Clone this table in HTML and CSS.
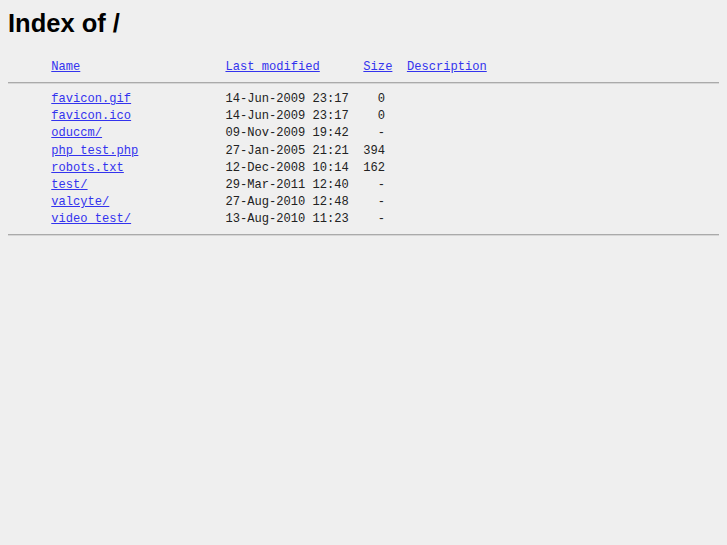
FILE: index.html
```html
<!DOCTYPE html>
<html lang="en">

<head>
    <meta charset="UTF-8">
    <title>Index of /</title>
    <link rel="stylesheet" href="styles.css">
</head>

<body>
    <h1>Index of /</h1>
    <div class="listing">
        <div class="row"><span class="icon"></span> <a href="#">Name</a>                    <a href="#">Last modified</a>      <a href="#">Size</a>  <a href="#">Description</a></div>
        <hr>
        <div class="row"><span class="icon"></span> <a href="#">favicon.gif</a>             14-Jun-2009 23:17    0   </div>
        <div class="row"><span class="icon"></span> <a href="#">favicon.ico</a>             14-Jun-2009 23:17    0   </div>
        <div class="row"><span class="icon"></span> <a href="#">oduccm/</a>                 09-Nov-2009 19:42    -   </div>
        <div class="row"><span class="icon"></span> <a href="#">php_test.php</a>            27-Jan-2005 21:21  394   </div>
        <div class="row"><span class="icon"></span> <a href="#">robots.txt</a>              12-Dec-2008 10:14  162   </div>
        <div class="row"><span class="icon"></span> <a href="#">test/</a>                   29-Mar-2011 12:40    -   </div>
        <div class="row"><span class="icon"></span> <a href="#">valcyte/</a>                27-Aug-2010 12:48    -   </div>
        <div class="row"><span class="icon"></span> <a href="#">video_test/</a>             13-Aug-2010 11:23    -   </div>
        <hr class="end">
    </div>
</body>

</html>
```

FILE: styles.css
```css
body {
    margin: 8px;
    background-color: #efefef;
    color: #222;
}

h1 {
    margin: 0 0 21px;
    font-family: "Liberation Sans", Arial, sans-serif;
    font-size: 25.5px;
    line-height: 30px;
    font-weight: bold;
    color: #000;
}

.listing {
    font-family: "Liberation Mono", "Courier New", monospace;
    font-size: 12.1px;
}

.row {
    white-space: pre;
    line-height: 17.15px;
}

.icon {
    display: inline-block;
    width: 36px;
}

a {
    color: #3333ee;
}

hr {
    margin: 6px 0 7px;
    border: 0;
    border-top: 1px solid #aaa;
    border-bottom: 1px solid #d6d6d6;
}

hr.end {
    margin-top: 6px;
}
```
